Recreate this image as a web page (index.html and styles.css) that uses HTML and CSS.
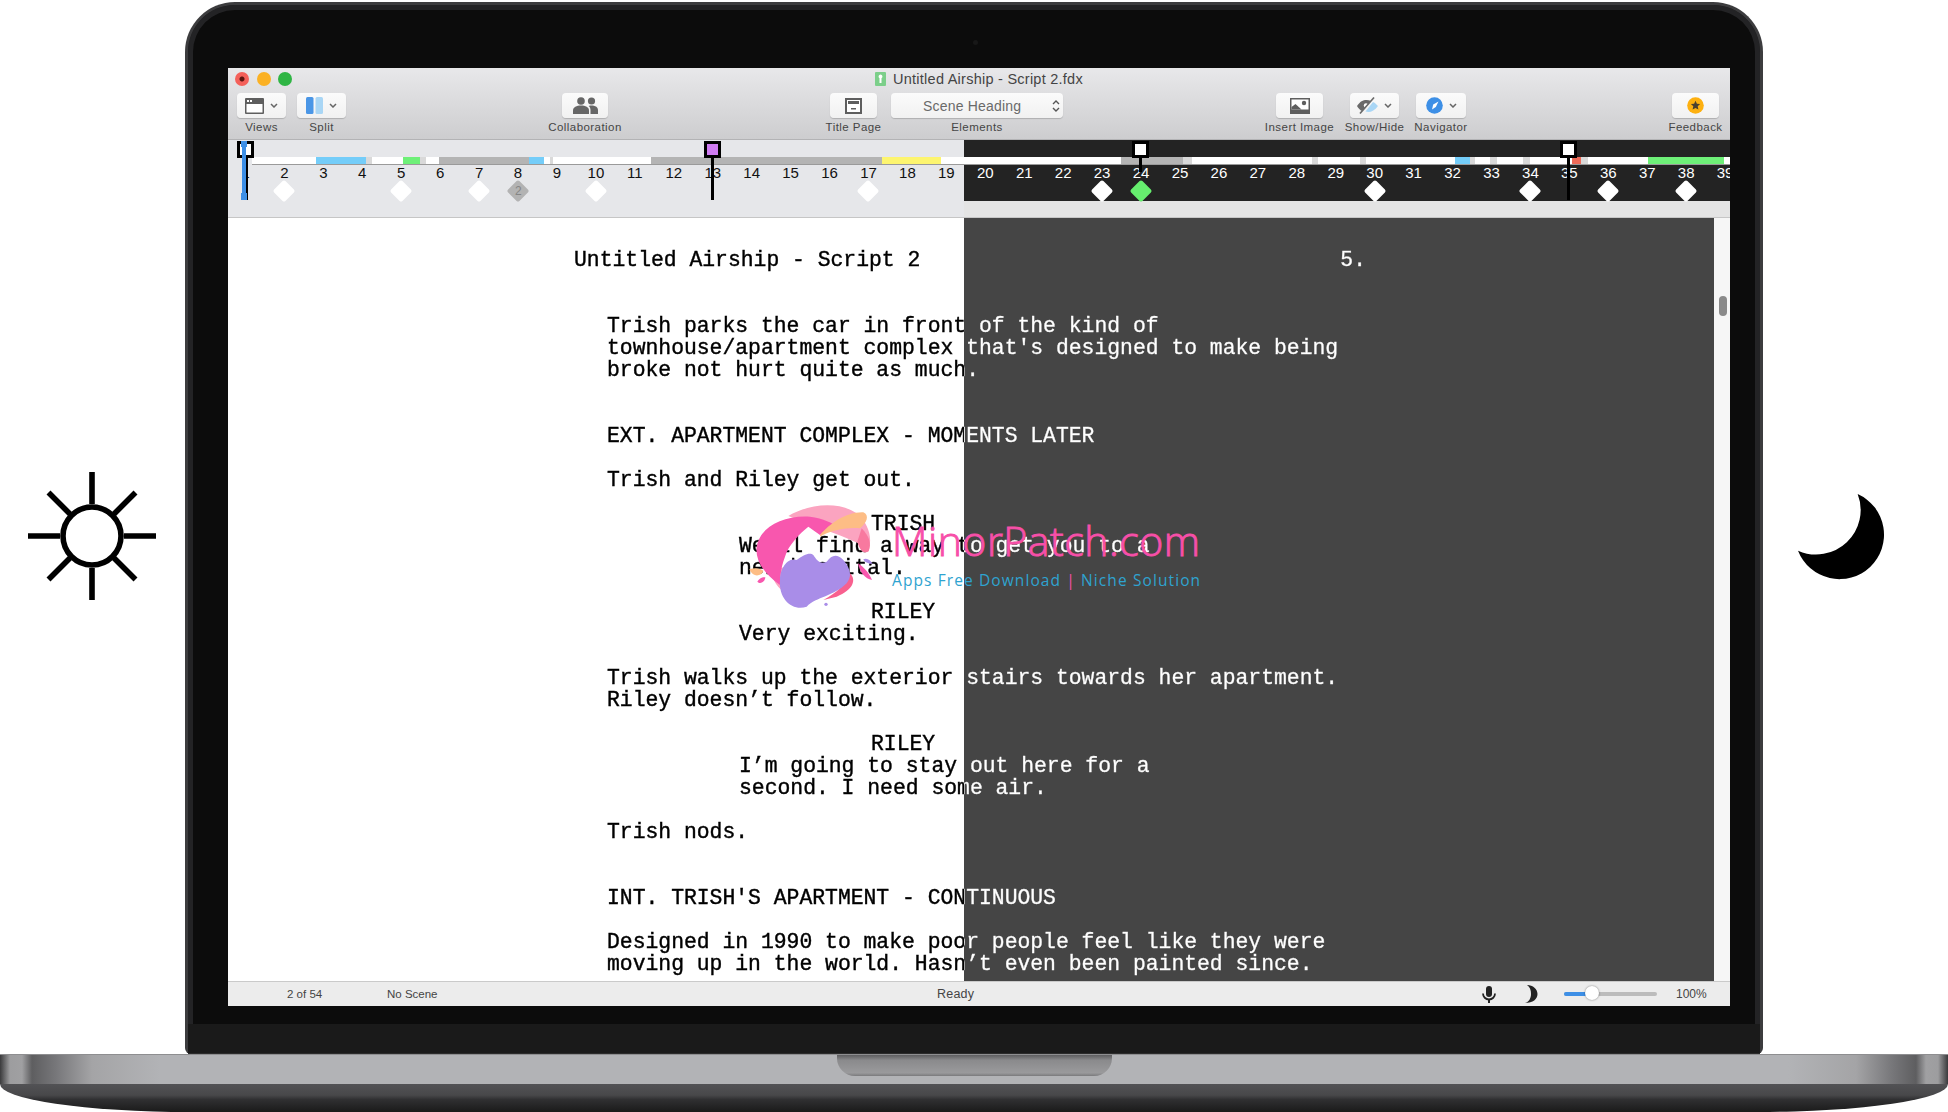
FILE: index.html
```html
<!DOCTYPE html>
<html lang="en">
<head>
<meta charset="utf-8">
<title>Untitled Airship - Script 2.fdx</title>
<link rel="stylesheet" href="styles.css">
</head>
<body>
<div class="stage">
  <div class="upper">
    <div class="side side-left">
      <svg class="sun" viewBox="0 0 130 130" fill="none" stroke="#000" stroke-width="5.6">
        <circle cx="65" cy="65" r="29"/>
        <path d="M65 1V33M65 97V129M1 65H33M97 65H129M21.5 21.5L43 43M108.500 21.500L87 43M21.500 108.500L43 87M108.500 108.500L87 87"/>
      </svg>
    </div>
    <div class="lid">
      <div class="screen">
        <header class="toolbar">
          <div class="titlerow">
            <div class="lights"><i class="light red"></i><i class="light amber"></i><i class="light green"></i></div>
            <div class="doc">
              <svg class="docicon" viewBox="0 0 11 14"><rect width="11" height="14" rx="1" fill="#7ccf8a"/><path d="M5.500 2.500a2 2 0 0 1 1 3.700V11H4.500V6.200a2 2 0 0 1 1-3.700z" fill="#fff"/></svg>
              <span>Untitled Airship - Script 2.fdx</span>
            </div>
            <div></div>
          </div>
          <div class="tools">
            <div class="tool t-views">
              <div class="btn">
                <svg class="ic" width="19" height="16" viewBox="0 0 19 16"><rect width="19" height="16" rx="1" fill="#5e5e5e"/><rect x="1.500" y="6" width="16" height="8.500" fill="#fff"/><rect x="2" y="2" width="2" height="2" fill="#fff"/><rect x="5" y="2" width="2" height="2" fill="#fff"/></svg>
                <svg class="chev" width="8" height="5" viewBox="0 0 8 5"><path d="M1 1l3 3 3-3" fill="none" stroke="#666" stroke-width="1.500"/></svg>
              </div>
              <span class="label">Views</span>
            </div>
            <div class="tool t-split">
              <div class="btn">
                <svg class="ic" width="17" height="17" viewBox="0 0 17 17"><rect width="7.500" height="17" rx="1.500" fill="#4a96e6"/><rect x="9.500" width="7.500" height="17" rx="1.500" fill="#a9d6f5"/></svg>
                <svg class="chev" width="8" height="5" viewBox="0 0 8 5"><path d="M1 1l3 3 3-3" fill="none" stroke="#666" stroke-width="1.500"/></svg>
              </div>
              <span class="label">Split</span>
            </div>
            <div class="tool t-collab">
              <div class="btn">
                <svg width="25" height="17" viewBox="0 0 25 17" fill="#666"><circle cx="8" cy="4" r="3.800"/><circle cx="18.500" cy="4" r="3.600"/><path d="M0 17v-3.500C0 10 3.500 8.500 8 8.500s8 1.500 8 5V17z"/><path d="M17.500 17v-4c0-1.500-.6-3-1.800-4 1-.3 1.800-.4 2.800-.4 3.500 0 6.500 1.500 6.500 4.400v4z"/></svg>
              </div>
              <span class="label">Collaboration</span>
            </div>
            <div class="tool t-title">
              <div class="btn">
                <svg width="17" height="16" viewBox="0 0 17 16"><rect x="1" y="1" width="15" height="14" fill="#fff" stroke="#5e5e5e" stroke-width="2"/><rect x="3" y="3" width="11" height="3" fill="#5e5e5e"/><rect x="6" y="10" width="5" height="1.500" fill="#5e5e5e"/></svg>
              </div>
              <span class="label">Title Page</span>
            </div>
            <div class="tool t-elements">
              <div class="btn btn-select">
                <span class="selecttext">Scene Heading</span>
                <svg class="stepper" width="8" height="14" viewBox="0 0 8 14"><path d="M1 5l3-3 3 3M1 9l3 3 3-3" fill="none" stroke="#555" stroke-width="1.400"/></svg>
              </div>
              <span class="label">Elements</span>
            </div>
            <div class="tool t-insert">
              <div class="btn">
                <svg width="20" height="16" viewBox="0 0 20 16"><rect width="20" height="16" fill="#5e5e5e"/><rect x="1.500" y="1.500" width="17" height="10" fill="#fff"/><circle cx="14" cy="5" r="2.200" fill="#5e5e5e"/><path d="M1.500 9l4-3 6 5.500H1.500z" fill="#5e5e5e"/></svg>
              </div>
              <span class="label">Insert Image</span>
            </div>
            <div class="tool t-show">
              <div class="btn">
                <svg class="ic" width="21" height="17" viewBox="0 0 21 17"><path d="M0 9c3-4.500 6-6 9.500-6 1.500 0 3 .3 4.500 1L5 14C3 13 1.500 11.500 0 9z" fill="#6a6a6a"/><circle cx="9" cy="8.500" r="2.200" fill="#fff"/><path d="M16 5c2 1 3.500 2.500 5 4-3 4-6.500 6-9.500 6-1 0-2-.2-3-.5z" fill="#a9d6f5"/><path d="M3 16.500L17 .5" stroke="#6a6a6a" stroke-width="1.600"/></svg>
                <svg class="chev" width="8" height="5" viewBox="0 0 8 5"><path d="M1 1l3 3 3-3" fill="none" stroke="#666" stroke-width="1.500"/></svg>
              </div>
              <span class="label">Show/Hide</span>
            </div>
            <div class="tool t-nav">
              <div class="btn">
                <svg class="ic" width="17" height="17" viewBox="0 0 17 17"><circle cx="8.500" cy="8.500" r="8.300" fill="#3d8fe6"/><path d="M12.500 4.500L9.800 10 6 12.500 7.200 7.500z" fill="#fff"/></svg>
                <svg class="chev" width="8" height="5" viewBox="0 0 8 5"><path d="M1 1l3 3 3-3" fill="none" stroke="#666" stroke-width="1.500"/></svg>
              </div>
              <span class="label">Navigator</span>
            </div>
            <div class="tool t-feedback">
              <div class="btn">
                <svg width="17" height="17" viewBox="0 0 17 17"><circle cx="8.500" cy="8.500" r="8.300" fill="#fdb010"/><path d="M8.500 3.700l1.400 3 3.200.4-2.400 2.200.7 3.200-2.900-1.600-2.900 1.600.7-3.200-2.400-2.200 3.200-.4z" fill="#4a3f30"/></svg>
              </div>
              <span class="label">Feedback</span>
            </div>
          </div>
        </header>

        <section class="timeline">
          <div class="bar">
            <i class="w" style="width:64px"></i><i class="b" style="width:50px"></i><i class="f" style="width:6px"></i><i class="w" style="width:31px"></i><i class="g" style="width:17px"></i><i class="f" style="width:6px"></i><i class="w" style="width:13px"></i><i class="k" style="width:90px"></i><i class="b" style="width:15px"></i><i class="w" style="width:6px"></i><i class="f" style="width:3px"></i><i class="w" style="width:98px"></i><i class="k" style="width:231px"></i><i class="y" style="width:59px"></i><i class="w" style="width:180px"></i><i class="k" style="width:62px"></i><i class="f" style="width:9px"></i><i class="w" style="width:120px"></i><i class="f" style="width:6px"></i><i class="w" style="width:42px"></i><i class="f" style="width:6px"></i><i class="w" style="width:89px"></i><i class="b" style="width:15px"></i><i class="f" style="width:5px"></i><i class="w" style="width:15px"></i><i class="f" style="width:7px"></i><i class="w" style="width:26px"></i><i class="f" style="width:7px"></i><i class="w" style="width:42px"></i><i class="r" style="width:9px"></i><i class="f" style="width:7px"></i><i class="w" style="width:60px"></i><i class="g" style="width:76px"></i><i class="w" style="width:6px"></i>
          </div>
          <div class="beats">
            <div class="beat"><span>1</span></div>
            <div class="beat"><span>2</span><i class="dia"></i></div>
            <div class="beat"><span>3</span></div>
            <div class="beat"><span>4</span></div>
            <div class="beat"><span>5</span><i class="dia"></i></div>
            <div class="beat"><span>6</span></div>
            <div class="beat"><span>7</span><i class="dia"></i></div>
            <div class="beat"><span>8</span><i class="dia dia-gray"><b>2</b></i></div>
            <div class="beat"><span>9</span></div>
            <div class="beat"><span>10</span><i class="dia"></i></div>
            <div class="beat"><span>11</span></div>
            <div class="beat"><span>12</span></div>
            <div class="beat"><span>13</span></div>
            <div class="beat"><span>14</span></div>
            <div class="beat"><span>15</span></div>
            <div class="beat"><span>16</span></div>
            <div class="beat"><span>17</span><i class="dia"></i></div>
            <div class="beat"><span>18</span></div>
            <div class="beat"><span>19</span></div>
            <div class="beat night"><span>20</span></div>
            <div class="beat night"><span>21</span></div>
            <div class="beat night"><span>22</span></div>
            <div class="beat night"><span>23</span><i class="dia"></i></div>
            <div class="beat night"><span>24</span><i class="dia dia-green"></i></div>
            <div class="beat night"><span>25</span></div>
            <div class="beat night"><span>26</span></div>
            <div class="beat night"><span>27</span></div>
            <div class="beat night"><span>28</span></div>
            <div class="beat night"><span>29</span></div>
            <div class="beat night"><span>30</span><i class="dia"></i></div>
            <div class="beat night"><span>31</span></div>
            <div class="beat night"><span>32</span></div>
            <div class="beat night"><span>33</span></div>
            <div class="beat night"><span>34</span><i class="dia"></i></div>
            <div class="beat night"><span>35</span></div>
            <div class="beat night"><span>36</span><i class="dia"></i></div>
            <div class="beat night"><span>37</span></div>
            <div class="beat night"><span>38</span><i class="dia"></i></div>
            <div class="beat night"><span>39</span></div>
          </div>
          <div class="head head-1"><i class="head-box"></i><i class="head-line"></i><i class="blue-line"></i><i class="blue-top"></i><i class="blue-bottom"></i></div>
          <div class="head head-13"><i class="head-box"></i><i class="head-line"></i></div>
          <div class="head head-24"><i class="head-box"></i><i class="head-line"></i></div>
          <div class="head head-35"><i class="head-box"></i><i class="head-line"></i></div>
        </section>

        <main class="page">
          <div class="script">
            <div class="runhead"><span>Untitled Airship - Script 2</span><span class="pageno">5.</span></div>
            <p class="action gap2">Trish parks the car in front of the kind of<br>townhouse/apartment complex that's designed to make being<br>broke not hurt quite as much.</p>
            <p class="action gap2">EXT. APARTMENT COMPLEX - MOMENTS LATER</p>
            <p class="action gap1">Trish and Riley get out.</p>
            <p class="character gap1">TRISH</p>
            <p class="dialogue">We'll find a way to get you to a<br>new hospital.</p>
            <p class="character gap1">RILEY</p>
            <p class="dialogue">Very exciting.</p>
            <p class="action gap1">Trish walks up the exterior stairs towards her apartment.<br>Riley doesn’t follow.</p>
            <p class="character gap1">RILEY</p>
            <p class="dialogue">I’m going to stay out here for a<br>second. I need some air.</p>
            <p class="action gap1">Trish nods.</p>
            <p class="action gap2">INT. TRISH'S APARTMENT - CONTINUOUS</p>
            <p class="action gap1">Designed in 1990 to make poor people feel like they were<br>moving up in the world. Hasn’t even been painted since.</p>
          </div>
          <div class="scrollbar"><i class="thumb"></i></div>
          <div class="mark">
            <svg class="marklogo" viewBox="0 0 1500 450">
              <path d="M205 108C260 75 350 60 410 100C445 130 458 170 446 212C430 225 420 210 415 190C350 160 260 130 205 108Z" fill="#fba4c0"/>
              <path d="M425 145C448 170 455 190 446 214C432 222 420 212 412 185Z" fill="#f8799f"/>
              <path d="M150 270C160 300 170 320 185 330L200 260Z" fill="#fba4c0"/>
              <path d="M110 200C120 140 190 105 270 110C310 115 340 130 350 140L300 165L265 140C240 160 205 195 195 230C180 270 180 300 180 315C130 280 105 240 110 200Z" fill="#f857ae"/>
              <path d="M300 165C330 130 380 95 430 97C450 105 440 130 420 145C390 140 330 150 300 170Z" fill="#fdbd85"/>
              <path d="M390 280C410 300 400 330 350 350L310 360C350 340 380 310 390 280Z" fill="#f8608f"/>
              <path d="M180 300C180 270 200 230 230 240C250 225 270 215 280 225C290 240 300 255 320 245C335 225 350 220 370 240C395 270 395 290 380 310C340 350 290 350 260 380C220 395 175 360 180 300Z" fill="#a98de8"/>
              <path d="M88 268C105 262 120 265 130 272C125 288 100 295 88 268Z" fill="#fdbd85"/>
              <path d="M112 305C116 295 130 290 136 292C136 302 122 316 112 305Z" fill="#f857ae"/>
              <path d="M414 250C430 260 448 280 456 300C436 298 418 275 414 250Z" fill="#f857ae"/>
              <path d="M430 238C440 232 452 240 458 252C447 252 435 248 430 238Z" fill="#a98de8"/>
              <circle cx="318" cy="373" r="5" fill="#a98de8"/>
            </svg>
            <div class="marktext">
              <div class="markname">MinorPatch.com</div>
              <div class="marksub">Apps Free Download <b>|</b> Niche Solution</div>
            </div>
          </div>
        </main>

        <footer class="status">
          <span class="pages">2 of 54</span>
          <span class="scene">No Scene</span>
          <span class="ready">Ready</span>
          <svg class="mic" width="14" height="17" viewBox="0 0 14 17"><rect x="4" y="0" width="6" height="11" rx="3" fill="#222"/><path d="M1 7.500a6 6 0 0 0 12 0" fill="none" stroke="#222" stroke-width="1.800"/><rect x="6" y="13" width="2" height="4" fill="#222"/></svg>
          <svg class="nightico" width="14" height="18" viewBox="0 0 14 18"><path d="M3 0c6 0 10.500 4 10.500 9S9 18 1 18c4-1 6-5 6-9S6 2 3 0z" fill="#222"/></svg>
          <div class="zoom"><i class="zoomfill"></i><i class="zoomknob"></i></div>
          <span class="pct">100%</span>
        </footer>
      </div>
      <div class="chin"></div>
    </div>
    <div class="side side-right">
      <svg class="moon" viewBox="0 0 90 90"><path d="M61 2A44 44 0 1 1 2 58A44 44 0 0 0 61 2Z" fill="#000"/></svg>
    </div>
  </div>
  <div class="deck"><div class="notch"></div></div>
  <div class="keel"></div>
</div>
</body>
</html>
```
FILE: styles.css
```css
* { box-sizing: border-box; }
html, body { margin: 0; padding: 0; background: #fff; }
body { width: 1948px; height: 1112px; overflow: hidden; font-family: "Liberation Sans", Arial, sans-serif; }
i { display: block; font-style: normal; }

.stage { width: 1948px; height: 1112px; padding-top: 2px; display: flex; flex-direction: column; }
.upper { display: grid; grid-template-columns: 185px 1578px 185px; height: 1052px; }
.side { display: flex; align-items: center; padding-top: 16px; }
.side-left { padding-left: 27px; }
.side-right { padding: 18px 0 0 33px; }
.sun { width: 130px; height: 130px; }
.moon { width: 91px; height: 91px; }

.lid {
  position: relative;
  background: #0c0c0c;
  border: 3px solid #3c3c3e;
  border-bottom-width: 0;
  border-radius: 50px 50px 6px 6px;
  padding: 63px 30px 0 40px;
  box-shadow: inset 0 0 0 5px #232325;
  display: flex;
  flex-direction: column;
}
.lid::before {
  content: "";
  position: absolute;
  left: 785px;
  top: 35px;
  width: 5px;
  height: 5px;
  border-radius: 50%;
  background: #181818;
}
.chin { height: 30px; margin: 18px -30px 0 -40px; background: #1a1a1a; border-bottom: 1px solid #2b2b2b; }
.screen { height: 938px; display: flex; flex-direction: column; overflow: hidden; background: #fff; }

/* toolbar */
.toolbar { height: 72px; flex: none; background: linear-gradient(#e8e8ea, #cdcdcf); border-bottom: 1px solid #b3b3b5; }
.titlerow { height: 25px; padding-bottom: 4px; display: grid; grid-template-columns: 1fr auto 1fr; align-items: center; }
.lights { display: flex; gap: 7.500px; padding-left: 7px; }
.light { width: 14px; height: 14px; border-radius: 50%; }
.red { background: radial-gradient(circle, #5a1510 0 2px, #f4605a 3px); }
.amber { background: #fbb124; }
.green { background: #2fb544; }
.doc { display: flex; align-items: center; gap: 7px; font-size: 14.500px; letter-spacing: .25px; color: #444; }
.docicon { width: 11px; height: 14px; }
.tools { display: flex; padding-left: 9px; align-items: flex-start; }
.tool { display: flex; flex-direction: column; align-items: center; flex: none; }
.label { font-size: 11.500px; line-height: 14px; margin-top: 2px; color: #454545; white-space: nowrap; letter-spacing: .45px; }
.btn { width: 100%; height: 25px; border-radius: 4px; background: linear-gradient(#fbfbfb, #f1f1f1); box-shadow: 0 1px 1px rgba(0,0,0,.18); display: flex; align-items: center; justify-content: center; }
.t-views { width: 49px; }
.t-split { width: 49px; margin-left: 11px; }
.t-collab { width: 46px; margin-left: 216px; }
.t-title { width: 47px; margin-left: 222px; }
.t-elements { width: 172px; margin-left: 14px; }
.t-insert { width: 47px; margin-left: 213px; }
.t-show { width: 49px; margin-left: 27px; }
.t-nav { width: 50px; margin-left: 17px; }
.t-feedback { width: 47px; margin-left: 206px; }
.chev { margin-left: 6px; }
.btn-select { justify-content: flex-start; padding-left: 32px; }
.selecttext { font-size: 14px; color: #6a6a6a; width: 127px; white-space: nowrap; letter-spacing: .2px; }
.stepper { margin-left: 2px; }

/* timeline */
.timeline {
  position: relative;
  height: 78px;
  flex: none;
  border-bottom: 1px solid #c6c6c6;
  background:
    linear-gradient(90deg, #e6e7ea 736px, #e4e4e4 736px) 0 61px / 100% 16px no-repeat,
    linear-gradient(90deg, #e6e7ea 736px, #232323 736px) 0 0 / 100% 61px no-repeat;
  overflow: hidden;
}
.bar { display: flex; height: 8px; margin: 17px 0 0 24px; border-bottom: 1px solid #9a9a9a; }
.bar i { flex: none; height: 7px; }
.w { background: #fff; }
.b { background: #74cdf9; }
.f { background: #d9d9d9; }
.g { background: #6ef078; }
.k { background: #b4b4b4; }
.y { background: #fdf56f; }
.r { background: #ee6a58; }
.beats { display: flex; margin: -1px 0 0 -2px; }
.beat { width: 38.950px; flex: none; display: flex; flex-direction: column; align-items: center; font-size: 15px; line-height: 17px; color: #111; }
.night { color: #fff; }
.dia { position: relative; width: 16px; height: 16px; margin-top: 2px; background: #fff; border-radius: 2px; transform: rotate(45deg); display: flex; align-items: center; justify-content: center; }
.dia-gray { background: #b3b3b3; }
.dia-gray b { font-weight: 400; font-size: 12px; line-height: 12px; color: #858585; transform: rotate(-45deg); }
.dia-green { background: #66ee6e; }
.head { position: absolute; top: 1px; width: 17px; }
.head-1 { left: 9px; }
.head-13 { left: 476px; }
.head-24 { left: 904px; }
.head-35 { left: 1332px; }
.head-box { width: 17px; height: 17px; border: 3px solid #000; background: #fff; }
.head-13 .head-box { background: #d07cf2; }
.head-line { width: 3px; height: 42px; margin-left: 7px; background: #000; }
.head-24 .head-line { height: 14px; }
.head-1 .head-line { width: 2px; margin-left: 9px; }
.blue-line { position: absolute; left: 5px; top: 0; width: 4px; height: 59px; background: #3d8fe6; }
.blue-top { position: absolute; left: 4px; top: 0; width: 6px; height: 6px; background: #3d8fe6; }
.blue-bottom { position: absolute; left: 4px; top: 52px; width: 6px; height: 7px; background: #3d8fe6; }

/* page */
.page {
  position: relative;
  flex: 1;
  min-height: 0;
  display: flex;
  overflow: hidden;
  background: linear-gradient(90deg, #fff 736px, #454545 736px);
}
.script {
  flex: 1;
  padding: 31px 0 0 346px;
  font-family: "Liberation Mono", "Courier New", monospace;
  font-size: 21.380px;
  line-height: 22px;
  white-space: nowrap;
  color: transparent;
  -webkit-text-stroke: .4px transparent;
  background: linear-gradient(90deg, #000 736px, #fff 736px);
  -webkit-background-clip: text;
  background-clip: text;
}
.script p { margin: 0; }
.runhead { display: flex; }
.pageno { margin-left: 420px; }
.gap1 { margin-top: 22px !important; }
.gap2 { margin-top: 44px !important; }
.action { margin-left: 33px !important; }
.dialogue { margin-left: 165px !important; }
.character { margin-left: 297px !important; }
.scrollbar { width: 16px; flex: none; background: #f6f6f6; padding: 78px 0 0 5px; }
.thumb { width: 8px; height: 20px; border-radius: 4px; background: #8a8a8a; }

/* watermark */
.mark { position: absolute; left: 492px; top: 262px; width: 500px; height: 150px; }
.marklogo { position: absolute; left: 0; top: 0; width: 500px; height: 150px; }
.marktext { position: absolute; left: 172px; top: 38px; white-space: nowrap; }
.markname { font-family: "Open Sans", sans-serif; font-weight: 300; font-size: 41px; line-height: 44px; letter-spacing: .5px; color: #f74fa8; -webkit-text-stroke: .9px #f74fa8; }
.marksub { font-family: "Open Sans", sans-serif; font-size: 15.500px; line-height: 22px; margin-top: 7px; letter-spacing: 1.100px; color: #2fa3d0; }
.marksub b { font-weight: 400; color: #f74fa8; }

/* status */
.status { height: 25px; flex: none; display: flex; align-items: center; font-size: 11.500px; color: #444; background: #ececec; border-top: 1px solid #cacaca; }
.pages { margin-left: 59px; width: 100px; }
.scene { width: 550px; }
.ready { font-size: 12.500px; width: 545px; letter-spacing: .2px; }
.nightico { margin-left: 28px; }
.zoom { position: relative; width: 93px; height: 4px; margin-left: 26px; border-radius: 2px; background: #bcbcbc; }
.zoomfill { width: 28px; height: 4px; border-radius: 2px; background: #3d8fe6; }
.zoomknob { position: absolute; left: 21px; top: -6px; width: 14px; height: 14px; border-radius: 50%; background: #fff; box-shadow: 0 0 2px rgba(0,0,0,.5); }
.pct { margin-left: 19px; font-size: 12px; }

/* base */
.deck {
  height: 30px;
  flex: none;
  display: flex;
  justify-content: center;
  background: linear-gradient(90deg, #3a3a3c 0, #9d9d9f 10px, #a0a0a2 22px, #5e5e60 32px, #77777a 56px, #a4a4a6 92px, #b2b3b6 160px, #b2b3b6 1788px, #a4a4a6 1856px, #77777a 1892px, #5e5e60 1916px, #a0a0a2 1926px, #9d9d9f 1938px, #3a3a3c 1948px);
  border-top: 1px solid #8e8e90;
}
.notch { width: 275px; height: 21px; margin-left: 1px; border-radius: 0 0 18px 18px; background: linear-gradient(#5e5e60, #8a8a8c 25%, #9a9a9c 85%, #7a7a7c); }
.keel {
  height: 28px;
  flex: none;
  background: linear-gradient(#525255, #48484a 40%, #303032 55%, #1a1a1a);
  border-radius: 0 0 190px 190px / 0 0 28px 28px;
}
```
